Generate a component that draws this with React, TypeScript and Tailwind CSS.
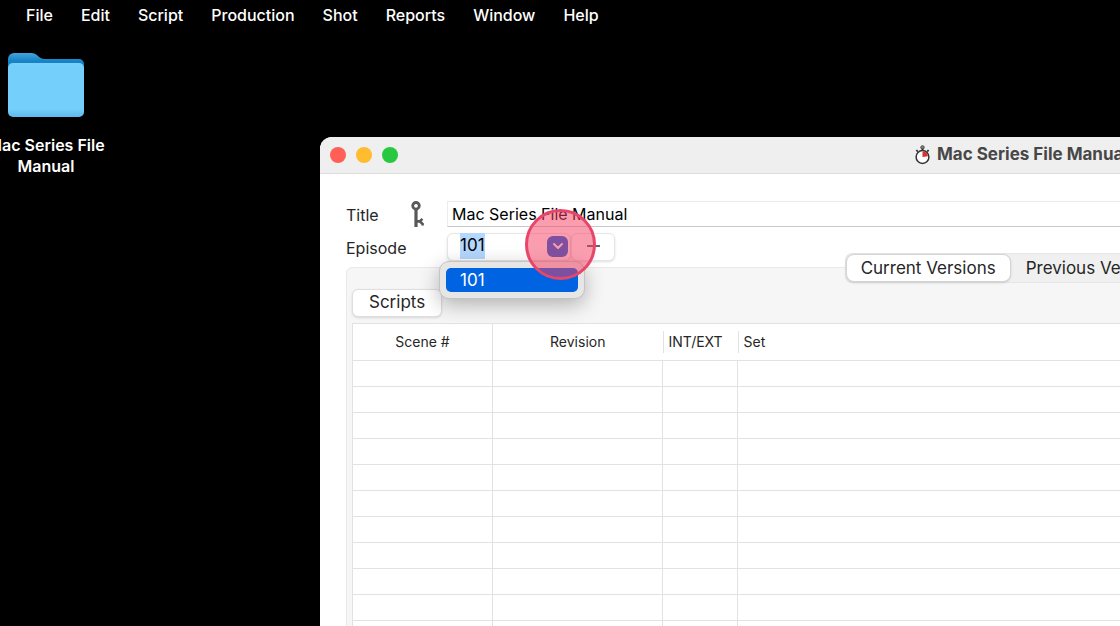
import { useEffect, useRef, useState } from "react";
import { LuChevronDown } from "react-icons/lu";

const menus = ["File", "Edit", "Script", "Production", "Shot", "Reports", "Window", "Help"];
const rows = Array.from({ length: 12 }, (_, i) => i);

function FolderIcon() {
  return (
    <svg width="78" height="66" viewBox="0 0 78 66" aria-hidden="true">
      <defs>
        <linearGradient id="back" x1="0" y1="0" x2="0" y2="1">
          <stop offset="0" stopColor="#45a3dc" />
          <stop offset="0.16" stopColor="#1583c6" />
          <stop offset="1" stopColor="#1583c6" />
        </linearGradient>
        <linearGradient id="front" x1="0" y1="0" x2="0" y2="1">
          <stop offset="0" stopColor="#7dd2fb" />
          <stop offset="0.04" stopColor="#75cffb" />
          <stop offset="0.85" stopColor="#75cffb" />
          <stop offset="1" stopColor="#5fb9ea" />
        </linearGradient>
      </defs>
      <path d="M1 7a6 6 0 0 1 6-6h17c3 0 5 1 7 3 2 2 4 3 7 3h34a5 5 0 0 1 5 5v40H1z" fill="url(#back)" />
      <rect x="1" y="11" width="76" height="54" rx="5" fill="url(#front)" />
    </svg>
  );
}

function StopwatchIcon() {
  return (
    <svg width="17" height="20" viewBox="0 0 17 20" fill="none" aria-hidden="true">
      <circle cx="8.5" cy="12" r="6.4" fill="#fff" stroke="#333" strokeWidth="1.5" />
      <path d="M8.5 12V6.4a5.6 5.6 0 0 1 5.5 4.8z" fill="#d8322a" />
      <circle cx="8.5" cy="2.4" r="1.7" fill="#888" stroke="#444" />
      <path d="M8.5 3.5v2M2.4 5l1.4 1.6M14.6 5l-1.4 1.6" stroke="#333" strokeWidth="1.8" />
    </svg>
  );
}

function KeyIcon() {
  return (
    <svg width="14" height="27" viewBox="0 0 14 27" fill="none" stroke="#58585a" aria-hidden="true">
      <circle cx="5" cy="4.8" r="3.3" strokeWidth="2.8" />
      <path d="M5 8V26" strokeWidth="3.2" />
      <path d="M6 20.4h3M8 21.2l3.4-3.4M8.6 20l3 3v1.4" strokeWidth="2.6" />
    </svg>
  );
}

function EpisodeField() {
  const inputRef = useRef<HTMLInputElement>(null);
  const [episode, setEpisode] = useState("101");

  useEffect(() => {
    inputRef.current?.focus();
    inputRef.current?.select();
  }, []);

  return (
    <div className="relative flex h-7 text-[17px]">
      <div className="flex w-[124px] items-center rounded-md border border-[#e6e6e6] bg-white pr-0.5 pb-0.5 pl-3 shadow-sm">
        <input
          id="episode"
          ref={inputRef}
          value={episode}
          onChange={(e) => setEpisode(e.target.value)}
          className="w-full min-w-0 bg-transparent text-black caret-transparent outline-none selection:bg-[#b3d7ff] selection:text-black"
        />
        <button aria-label="Show episodes" className="flex size-[21px] shrink-0 items-center justify-center rounded-md bg-[#0a63e0] text-white">
          <LuChevronDown size={16} strokeWidth={3} />
        </button>
      </div>
      <button aria-label="Add episode" className="flex w-11 items-center justify-center rounded-md border border-[#e6e6e6] bg-white pb-0.5 shadow-sm">
        <svg width="15" height="15" viewBox="0 0 15 15" stroke="#333" strokeWidth="1.3" aria-hidden="true">
          <path d="M1 7h13" />
        </svg>
      </button>

      {/* Open list */}
      <ul role="listbox" aria-label="Episodes" className="absolute top-7 -left-2 z-10 w-[146px] rounded-[10px] border border-[#c4c4c4] bg-[#e6e6e6] px-1.5 py-1.5 shadow-[0_6px_20px_rgba(0,0,0,0.28)]">
        <li role="option" aria-selected="true" className="h-6 rounded-[5px] bg-[#0063e1] pl-3.5 leading-6 text-white">
          101
        </li>
      </ul>

      {/* Click marker */}
      <div className="pointer-events-none absolute -top-6 left-[78px] z-20 size-[71px] rounded-full border-[3px] border-[#e8456a] bg-[#f53d5f]/50" />
    </div>
  );
}

export default function App() {
  return (
    <div className="flex h-screen flex-col overflow-hidden bg-black font-['Inter',sans-serif]">
      <nav className="flex h-[30px] shrink-0 items-center gap-7 pl-[26px] text-base font-medium text-white">
        {menus.map((menu) => (
          <button key={menu}>{menu}</button>
        ))}
      </nav>

      <div className="flex min-h-0 flex-1">
        <div className="w-80 shrink-0 pt-[22px]">
          <div className="-ml-[14px] flex w-[120px] flex-col items-center">
            <FolderIcon />
            <p className="mt-[17px] text-center text-base leading-[21px] font-semibold text-white">
              Mac Series File Manual
            </p>
          </div>
        </div>

        <main className="mt-[107px] w-[125%] shrink-0 overflow-hidden rounded-t-xl bg-white text-[#262626]">
          <header className="relative flex h-[37px] items-center justify-center border-b border-[#dcdcdc] bg-[#efefef]">
            <div className="absolute left-2.5 flex gap-2.5">
              <button aria-label="Close" className="size-4 rounded-full bg-[#ff5f57]" />
              <button aria-label="Minimize" className="size-4 rounded-full bg-[#febc2e]" />
              <button aria-label="Zoom" className="size-4 rounded-full bg-[#28c840]" />
            </div>
            <h1 className="flex items-center gap-1.5 pl-0.5 text-[17px] font-bold text-[#474747]">
              <StopwatchIcon />
              Mac Series File Manual
            </h1>
          </header>

          <div className="px-[26px] pt-[27px]">
            <div className="grid grid-cols-[101px_1fr] items-center gap-y-1.5 text-base">
              <div className="flex h-[26px] items-center justify-between pr-[22px]">
                <label htmlFor="title" className="pt-0.5">Title</label>
                <KeyIcon />
              </div>
              <input
                id="title"
                defaultValue="Mac Series File Manual"
                className="h-[26px] w-full border border-[#ececec] border-b-[#c8c8c8] bg-white px-1 text-black outline-none"
              />
              <label htmlFor="episode" className="pt-0.5">Episode</label>
              <EpisodeField />
            </div>

            <section className="mt-1.5 rounded-md border border-[#e9e9e9] bg-[#f6f6f6] px-[5px]">
              <div className="-mt-3.5 flex justify-center">
                <div role="tablist" className="flex h-7 rounded-md bg-[#f0f0f0] text-[17px] shadow-[0_0_0_1px_#e6e6e6]">
                  <button role="tab" aria-selected="true" className="rounded-lg border border-[#d4d4d4] bg-white px-3.5 leading-6 shadow-sm">
                    Current Versions
                  </button>
                  <button role="tab" aria-selected="false" className="border border-transparent pr-6 pl-3.5 leading-6">
                    Previous Versions
                  </button>
                </div>
              </div>
              <button className="mt-[7px] block h-7 rounded-md border border-[#dedede] bg-white px-4 pb-0.5 text-[17px] shadow-sm">
                Scripts
              </button>

              <table className="mt-1.5 w-full table-fixed border-collapse bg-white text-sm">
                <colgroup>
                  <col className="w-[140px]" />
                  <col className="w-[170px]" />
                  <col className="w-[75px]" />
                  <col />
                </colgroup>
                <thead>
                  <tr className="h-[37px] border border-[#e2e2e2]">
                    <th className="border-r border-[#e2e2e2] font-normal">Scene #</th>
                    <th className="font-normal">Revision</th>
                    <th className="p-0 text-left font-normal">
                      <div className="h-[22px] border-l border-[#e2e2e2] pl-[5px] leading-[22px]">INT/EXT</div>
                    </th>
                    <th className="p-0 text-left font-normal">
                      <div className="h-[22px] border-l border-[#e2e2e2] pl-[5px] leading-[22px]">Set</div>
                    </th>
                  </tr>
                </thead>
                <tbody>
                  {rows.map((row) => (
                    <tr key={row} className="h-[26px]">
                      <td className="border border-[#e2e2e2]" />
                      <td className="border border-[#e2e2e2]" />
                      <td className="border border-[#e2e2e2]" />
                      <td className="border border-[#e2e2e2]" />
                    </tr>
                  ))}
                </tbody>
              </table>
            </section>
          </div>
        </main>
      </div>
    </div>
  );
}
